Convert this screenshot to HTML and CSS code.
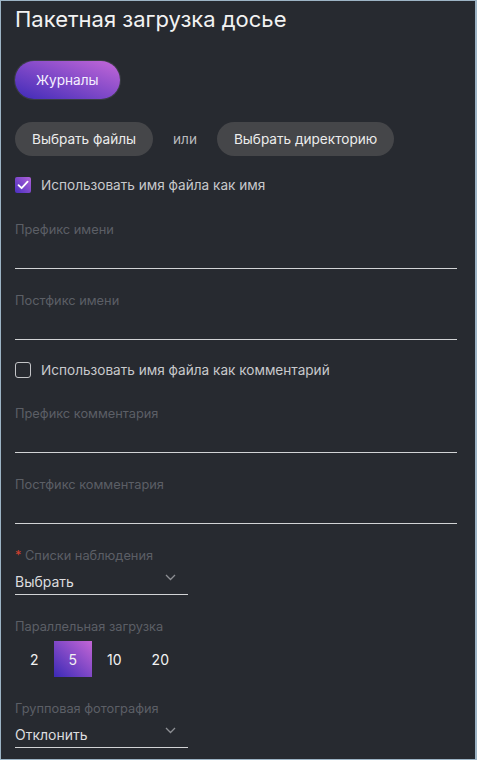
FILE: index.html
```html
<!DOCTYPE html>
<html lang="ru">
<head>
    <meta charset="UTF-8" />
    <meta name="viewport" content="width=device-width, initial-scale=1" />
    <title>Пакетная загрузка досье</title>
    <link rel="stylesheet" href="styles.css">
</head>
<body>
    <div class="panel">
        <h1 class="title">Пакетная загрузка досье</h1>

        <button class="btn-accent">Журналы</button>

        <div class="pick-row">
            <button class="btn-dark">Выбрать файлы</button>
            <span class="or">или</span>
            <button class="btn-dark">Выбрать директорию</button>
        </div>

        <label class="check check-first">
            <span class="box checked">
                <svg width="12" height="10" viewBox="0 0 12 10"><path d="M1.5 5.2 L4.6 8.2 L10.6 1.6" fill="none" stroke="#fff" stroke-width="1.8" stroke-linecap="round" stroke-linejoin="round"/></svg>
            </span>
            Использовать имя файла как имя
        </label>

        <div class="field">
            <div class="field-label">Префикс имени</div>
            <div class="line-input"></div>
        </div>
        <div class="field field-last">
            <div class="field-label">Постфикс имени</div>
            <div class="line-input"></div>
        </div>

        <label class="check">
            <span class="box"></span>
            Использовать имя файла как комментарий
        </label>

        <div class="field">
            <div class="field-label">Префикс комментария</div>
            <div class="line-input"></div>
        </div>
        <div class="field">
            <div class="field-label">Постфикс комментария</div>
            <div class="line-input"></div>
        </div>

        <div class="field">
            <div class="field-label"><span class="req">*</span> Списки наблюдения</div>
            <div class="select">
                <span>Выбрать</span>
                <svg class="chevron" width="11" height="7" viewBox="0 0 11 7"><path d="M1 1 L5.5 5.5 L10 1" fill="none" stroke="#8d8f94" stroke-width="1.3"/></svg>
            </div>
        </div>

        <div class="field">
            <div class="field-label">Параллельная загрузка</div>
            <div class="options">
                <span class="opt">2</span>
                <span class="opt active">5</span>
                <span class="opt">10</span>
                <span class="opt">20</span>
            </div>
        </div>

        <div class="field">
            <div class="field-label">Групповая фотография</div>
            <div class="select">
                <span>Отклонить</span>
                <svg class="chevron" width="11" height="7" viewBox="0 0 11 7"><path d="M1 1 L5.5 5.5 L10 1" fill="none" stroke="#8d8f94" stroke-width="1.3"/></svg>
            </div>
        </div>
    </div>
</body>
</html>
```

FILE: styles.css
```css
* { box-sizing: border-box; }
html, body { margin: 0; padding: 0; background: #272a30; }
body { font-family: Inter, "Noto Sans", sans-serif; color: #e6e6e6; }

.panel {
    height: 760px;
    overflow: hidden;
    border: 1px solid #9db4c5;
    border-right-width: 2px;
    background: #272a30;
    padding: 0 18px 0 14px;
}

.title { margin: 4px 0 0; font-size: 22px; font-weight: 400; line-height: 28px; color: #f2f2f2; }

button { font-family: inherit; border: none; cursor: pointer; }
.btn-accent {
    display: block;
    margin-top: 28px;
    height: 38px;
    padding: 0 21px;
    border-radius: 19px;
    font-size: 13.6px;
    color: #f4f0ff;
    background: linear-gradient(to top right, #3f2bb8, #c468d8);
    box-shadow: 0 0 0 1px #3a3d44;
}

.pick-row { display: flex; align-items: center; margin-top: 23px; }
.btn-dark {
    height: 34px;
    padding: 0 17px;
    border-radius: 17px;
    background: #454649;
    color: #ececec;
    font-size: 13.6px;
}
.or { margin: 0 20px; font-size: 13.6px; color: #b9babd; }

.check { display: flex; align-items: center; gap: 10px; height: 20px; margin: 20px 0 25px; font-size: 13.6px; color: #c8c9cc; }
.check-first { margin-top: 19px; margin-bottom: 26px; }
.box { width: 16px; height: 16px; border: 1px solid #c4c5c8; border-radius: 3px; display: flex; align-items: center; justify-content: center; }
.box.checked { border: none; border-radius: 2px; background: linear-gradient(to top right, #4a2fc0, #b062d8); }

.field { margin-bottom: 23px; }
.field-last { margin-bottom: 0; }
.field-label { font-size: 12.8px; line-height: 18px; color: #5c5f66; }
.req { color: #d2412f; }
.line-input { height: 30px; border-bottom: 1px solid #d2d3d5; }

.select {
    width: 173px;
    height: 30px;
    border-bottom: 1px solid #d2d3d5;
    display: flex;
    align-items: center;
    justify-content: space-between;
    padding: 4px 12px 0 0;
    font-size: 14px;
    color: #dcdcde;
}
.chevron { margin-top: -8px; }

.options { display: flex; margin-top: 5px; }
.opt { height: 36px; padding: 0 15px; display: flex; align-items: center; justify-content: center; font-size: 14px; color: #f2f2f2; }
.opt.active { background: linear-gradient(to top right, #3b2ab6, #c466d6); }
```
